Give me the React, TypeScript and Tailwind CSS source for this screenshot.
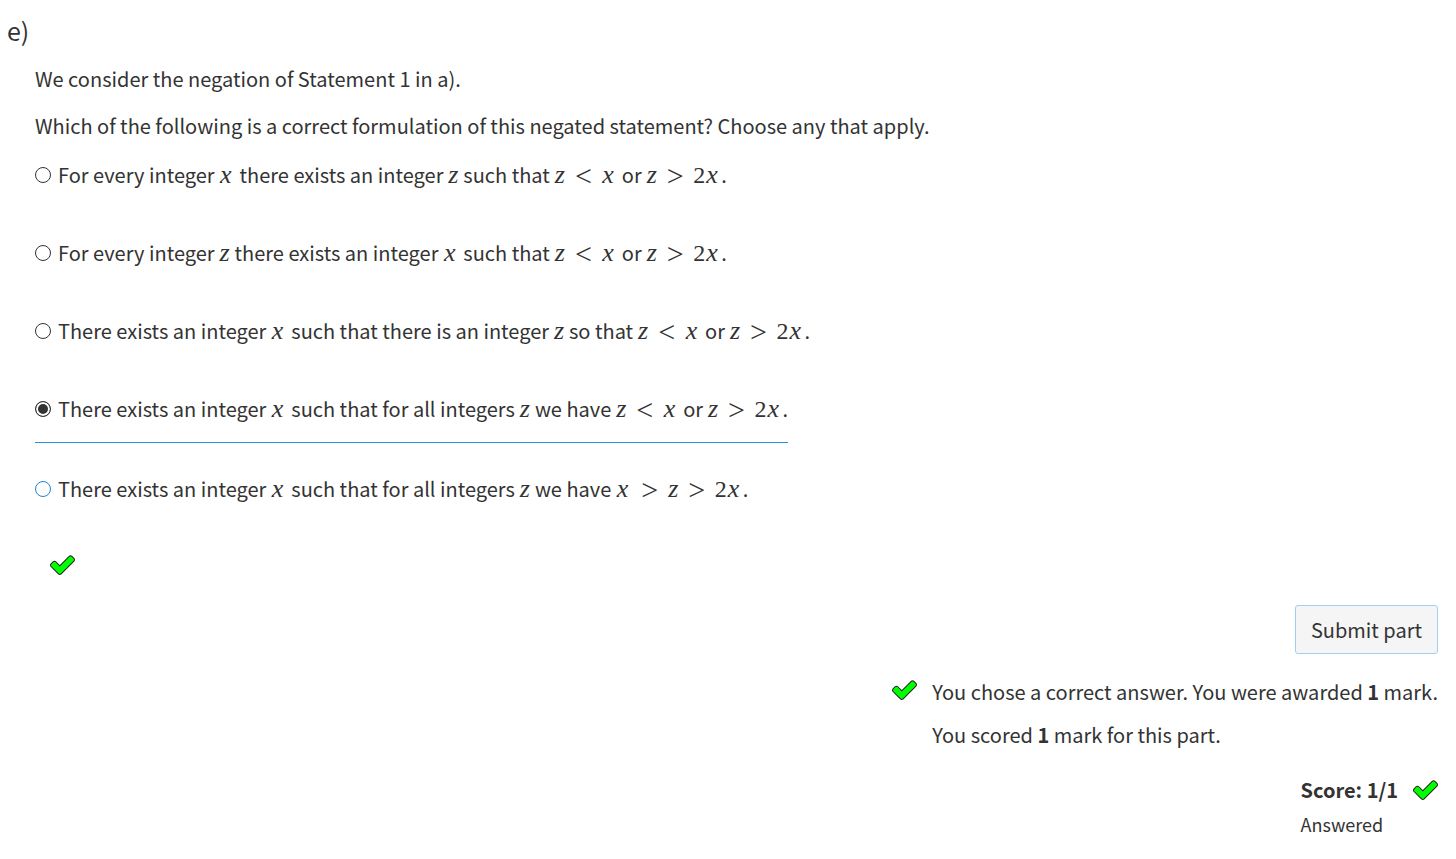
import { useState, type ReactNode } from "react";

function Tick() {
  return (
    <svg
      className="h-5 w-[25px] shrink-0"
      viewBox="54 244 1685 1348"
      role="img"
      aria-label="Correct"
    >
      <path
        d="M1671 566q0 40-28 68l-724 724-136 136q-28 28-68 28t-68-28l-136-136-362-362q-28-28-28-68t28-68l136-136q28-28 68-28t68 28l294 295 656-657q28-28 68-28t68 28l136 136q28 28 28 68z"
        fill="#00ff00"
        stroke="#222"
        strokeWidth="134"
        strokeLinejoin="round"
        paintOrder="stroke"
      />
    </svg>
  );
}

function X() {
  return (
    <i className="inline-block w-4 pl-px font-['Liberation_Serif',serif] text-[26px] leading-5">
      x
    </i>
  );
}

function Z() {
  return (
    <i className="inline-block w-[11px] text-center font-['Liberation_Serif',serif] text-[26px] leading-5">
      z
    </i>
  );
}

function Rel({ children }: { children: ReactNode }) {
  return (
    <span className="mx-[9px] inline-block w-[18px] text-center align-[-3px] font-['Liberation_Serif',serif] text-[30px] leading-5">
      {children}
    </span>
  );
}

function TwoX() {
  return (
    <>
      <span className="font-['Liberation_Serif',serif] text-2xl leading-5">
        2
      </span>
      <X />
    </>
  );
}

function Outside() {
  return (
    <>
      <Z />
      <Rel>&lt;</Rel>
      <X /> or <Z />
      <Rel>&gt;</Rel>
      <TwoX />.
    </>
  );
}

const options: ReactNode[] = [
  <>
    For every integer <X /> there exists an integer <Z /> such that <Outside />
  </>,
  <>
    For every integer <Z /> there exists an integer <X /> such that <Outside />
  </>,
  <>
    There exists an integer <X /> such that there is an integer <Z /> so that{" "}
    <Outside />
  </>,
  <>
    There exists an integer <X /> such that for all integers <Z /> we have{" "}
    <Outside />
  </>,
  <>
    There exists an integer <X /> such that for all integers <Z /> we have <X />
    <Rel>&gt;</Rel>
    <Z />
    <Rel>&gt;</Rel>
    <TwoX />.
  </>,
];

export default function App() {
  const [choice, setChoice] = useState(3);

  return (
    <main className="bg-white pt-2.5 pr-[18px] pb-4 pl-[7px] font-['Noto_Sans_CJK_SC',sans-serif] text-[20px] leading-8 text-[#333]">
      <h2 className="text-[25px] leading-10">e)</h2>
      <section className="pl-7">
        <p className="mt-[13px]">We consider the negation of Statement 1 in a).</p>
        <p className="mt-[15px]">
          Which of the following is a correct formulation of this negated
          statement? Choose any that apply.
        </p>
        <ul className="mt-[17px]">
          {options.map((text, i) => (
            <li
              key={i}
              className={choice === i ? "flex pb-[30px]" : "flex pb-[29px]"}
            >
              <label
                className={
                  choice === i
                    ? "flex items-center gap-[7px] border-b border-[#2490dd] pb-[17px]"
                    : "flex items-center gap-[7px] pb-[17px]"
                }
              >
                <input
                  type="radio"
                  name="formulation"
                  checked={choice === i}
                  onChange={() => setChoice(i)}
                  className={
                    i === 4
                      ? "size-4 shrink-0 appearance-none rounded-full border border-[#1a86d8] bg-white"
                      : "size-4 shrink-0 appearance-none rounded-full border border-[#333] bg-white checked:bg-[#333] checked:shadow-[inset_0_0_0_2px_white]"
                  }
                />
                <span>{text}</span>
              </label>
            </li>
          ))}
        </ul>
        <div className="mt-1 pl-[15px]">
          <Tick />
        </div>
      </section>
      <div className="mt-[30px] flex flex-col items-end">
        <button
          type="button"
          className="rounded-[3px] border border-[#a0d0f0] bg-[#f5f5f5] px-[15px] py-2 leading-[31px]"
        >
          Submit part
        </button>
        <div className="mt-[22px] flex gap-[15px]">
          <div className="pt-1">
            <Tick />
          </div>
          <div>
            <p>
              You chose a correct answer. You were awarded <b>1</b> mark.
            </p>
            <p className="mt-[11px]">
              You scored <b>1</b> mark for this part.
            </p>
          </div>
        </div>
        <div className="mt-[23px]">
          <p className="flex items-center gap-[15px] font-bold">
            Score: 1/1 <Tick />
          </p>
          <p className="mt-0.5 text-[18px]">Answered</p>
        </div>
      </div>
    </main>
  );
}
